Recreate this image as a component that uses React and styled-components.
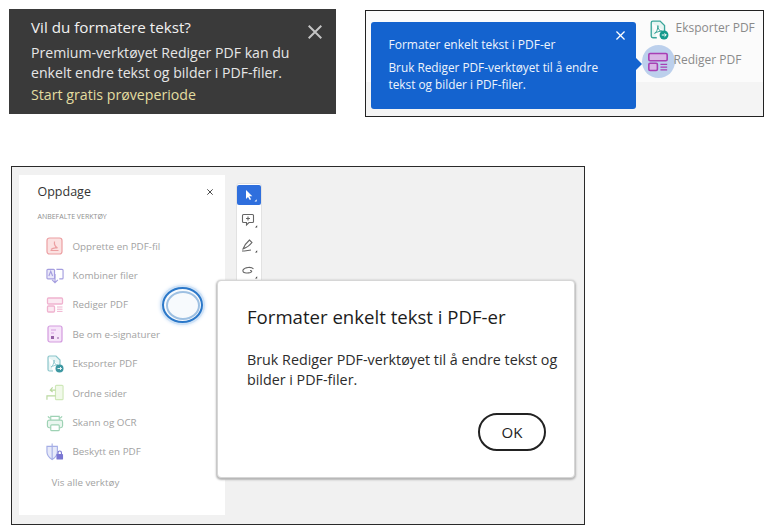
import React from 'react'
import styled, { createGlobalStyle } from 'styled-components'

const Global = createGlobalStyle`
  html, body { margin: 0; padding: 0; background: #fff; }
  body { font-family: "Open Sans", "Noto Sans", sans-serif; }
`

const Page = styled.div`
  width: 768px;
  height: 530px;
  overflow: hidden;
  position: relative;
`

const TopRow = styled.div`
  display: flex;
  align-items: flex-start;
  padding: 9px 0 0 9px;
`

const Banner = styled.div`
  width: 327px;
  height: 105px;
  box-sizing: border-box;
  background: #3a3a3a;
  padding: 8px 14px 0 22px;
  display: flex;
  justify-content: space-between;
  color: #f1f1f1;
`

const BannerTitle = styled.div`
  font-size: 15.2px;
  line-height: 20px;
  margin-bottom: 6px;
`

const BannerBody = styled.div`
  font-size: 14.1px;
  line-height: 20px;
  color: #e6e6e6;
`

const BannerLink = styled.div`
  font-size: 14.2px;
  line-height: 20px;
  margin-top: 2px;
  color: #e3dda0;
`

const BannerClose = styled.svg`
  width: 14px;
  height: 14px;
  margin-top: 8px;
  stroke: #c4c4c4;
  stroke-width: 1.4;
  flex: none;
`

const CoachFrame = styled.div`
  margin: 1px 0 0 29px;
  width: 399px;
  height: 107px;
  box-sizing: border-box;
  border: 1.5px solid #222;
  background: linear-gradient(#fbfbfb 0, #fbfbfb 71px, #f4f4f4 71px);
  display: flex;
  align-items: flex-start;
  padding: 10.5px 0 0 4.5px;
`

const Coach = styled.div`
  position: relative;
  width: 265px;
  height: 87px;
  flex: none;
  box-sizing: border-box;
  background: #1463cf;
  border-radius: 3px;
  color: #eef4fc;
  padding: 14px 24px 0 18px;
  font-size: 11.8px;
  line-height: 17px;

  &::after {
    content: '';
    position: absolute;
    right: -6px;
    top: 36px;
    border-left: 6px solid #1463cf;
    border-top: 6px solid transparent;
    border-bottom: 6px solid transparent;
  }
`

const CoachTitle = styled.div`
  margin-bottom: 6px;
  font-size: 12px;
`

const CoachClose = styled.svg`
  position: absolute;
  right: 11px;
  top: 9px;
  width: 9px;
  height: 9px;
  stroke: #fff;
  stroke-width: 1.4;
`

const SideList = styled.div`
  display: flex;
  flex-direction: column;
  gap: 10px;
  margin: -3px 0 0 6px;
`

const SideItem = styled.div`
  display: flex;
  align-items: center;
  height: 22px;
  gap: ${p => p.$gap}px;
  color: #8a8a8a;
  font-size: 12px;
  white-space: nowrap;
  padding-left: ${p => p.$indent || 0}px;
`

const SideLabel = styled.span`
  position: relative;
  top: -2px;
`

const IconHalo = styled.div`
  width: 33px;
  height: 33px;
  margin-right: -1px;
  border-radius: 50%;
  background: #bcd0ec;
  display: flex;
  align-items: center;
  justify-content: center;
  flex: none;
`

const Frame = styled.div`
  position: absolute;
  left: 11px;
  top: 166px;
  width: 574px;
  height: 359px;
  box-sizing: border-box;
  border: 1.5px solid #2a2a2a;
  background: #f1f1f1;
  display: flex;
  align-items: flex-start;
  padding: 7.5px 0 0 6.5px;
`

const Panel = styled.div`
  width: 206px;
  height: 340px;
  flex: none;
  box-sizing: border-box;
  background: #fff;
  padding: 8px 12px 0 19px;
  position: relative;
`

const PanelHead = styled.div`
  display: flex;
  justify-content: space-between;
  align-items: center;
  font-size: 12.5px;
  color: #333;
  height: 18px;
`

const PanelClose = styled.svg`
  width: 6px;
  height: 6px;
  stroke: #444;
  stroke-width: 1.6;
`

const SectionLabel = styled.div`
  font-size: 7px;
  color: #8e8e8e;
  margin: 10px 0 10px;
  line-height: 11px;
`

const ToolRow = styled.div`
  display: flex;
  align-items: center;
  height: 29.4px;
  gap: 9px;
  padding-left: 8px;
  font-size: 9.8px;
  color: #a2a2a2;
  white-space: nowrap;
`

const IconCell = styled.div`
  width: 18px;
  height: 18px;
  flex: none;
  display: flex;
  align-items: center;
  justify-content: center;
  opacity: 0.8;
`

const SeeAll = styled.div`
  font-size: 9.8px;
  color: #a2a2a2;
  margin: 9px 0 0 14px;
`

const Pulse = styled.div`
  position: absolute;
  left: 143.500px;
  top: 112.500px;
  width: 41px;
  height: 36px;
  box-sizing: border-box;
  border-radius: 50%;
  border: 2.500px solid #2b78c9;
  background: #f7fafd;
  box-shadow: 0 0 0 2px #cfe2f6, 0 0 3px 3px #e3eefa;

  &::after {
    content: '';
    position: absolute;
    inset: 1.500px;
    border-radius: 50%;
    border: 2px solid #9ec0e2;
  }
`

const Toolbar = styled.div`
  width: 26px;
  height: 130px;
  flex: none;
  box-sizing: border-box;
  margin: 8px 0 0 11px;
  background: #fff;
  border: 1px solid #e2e2e2;
  border-radius: 3px;
  padding: 1px 0 0 0;
  display: flex;
  flex-direction: column;
  align-items: center;
`

const ToolButton = styled.div`
  width: 24px;
  height: ${p => (p.$active ? 20 : 25.500)}px;
  margin-bottom: ${p => (p.$active ? 3 : 0)}px;
  border-radius: 2px;
  background: ${p => (p.$active ? '#2f6fdd' : 'transparent')};
  display: flex;
  align-items: center;
  justify-content: center;
  flex: none;
`

const Dialog = styled.div`
  position: absolute;
  left: 205px;
  top: 113px;
  width: 358px;
  height: 198px;
  box-sizing: border-box;
  background: #fff;
  border-radius: 4px;
  border: 1px solid #d6d6d6;
  box-shadow: 0 1px 2px 1px #b5b5b5;
  padding: 22px 10px 0 29px;
  display: flex;
  flex-direction: column;
`

const DialogTitle = styled.div`
  font-size: 18.600px;
  line-height: 28px;
  color: #1c1c1c;
  margin-bottom: 19px;
`

const DialogBody = styled.div`
  font-size: 14.300px;
  line-height: 20px;
  color: #2c2c2c;
`

const OkButton = styled.button`
  align-self: flex-end;
  width: 68px;
  height: 38px;
  margin: 23px 18px 0 0;
  border: 2px solid #222;
  border-radius: 19px;
  background: #fff;
  font: 15px "Open Sans", sans-serif;
  color: #222;
  padding: 0;
`

const Cross = ({ as: C }) =>
  <C viewBox="0 0 10 10" fill="none">
    <path d="M0.500 0.500 L9.500 9.500 M9.500 0.500 L0.500 9.500" />
  </C>

const Corner = ({ c = '#444' }) => <path d="M17 17.500h2.200v-2.200z" fill={c} stroke="none" />

const CreateIcon = () =>
  <svg width="17" height="18" viewBox="0 0 17 18" fill="none" stroke="#e8888c" strokeWidth="1.200">
    <rect x="1" y="1" width="15" height="16" rx="2.500" fill="#fbdcdc" />
    <path d="M4.500 13.500h8M8.500 4.500c-.5 3 .5 5 3 6.500-2.500-.5-5 0-6.500 1.500" />
  </svg>

const CombineIcon = () =>
  <svg width="19" height="18" viewBox="0 0 19 18" fill="none" stroke="#8f86d8" strokeWidth="1.200">
    <rect x="1" y="2" width="8" height="10" rx="1" fill="#e6e3f8" />
    <path d="M11 2h6a1 1 0 0 1 1 1v8a1 1 0 0 1-1 1h-3" />
    <path d="M9.500 7v9M6.500 13l3 3 3-3M3 9l2-5 2 5" />
  </svg>

const EditIcon = ({ size = 18, stroke = '#eda0c4', fill = '#fbe6f0' }) =>
  <svg width={size} height={size} viewBox="0 0 18 18" fill="none" stroke={stroke} strokeWidth="1.300">
    <rect x="1.500" y="2" width="15" height="6" rx="1" fill={fill} />
    <rect x="1.500" y="10" width="7" height="6" rx="1" fill={fill} />
    <path d="M11 11h5.500M11 13.200h5.500M11 15.400h5.500" strokeWidth="1" />
  </svg>

const SignIcon = () =>
  <svg width="16" height="18" viewBox="0 0 16 18" fill="none" stroke="#c983d8" strokeWidth="1.200">
    <rect x="1" y="1" width="14" height="16" rx="2" fill="#f5def8" />
    <path d="M4 5h5M4 8h3" />
    <rect x="4" y="11" width="3" height="3" fill="#7c3a90" stroke="none" />
    <path d="M10 13h2" stroke="#7c3a90" />
  </svg>

const ExportIcon = ({ size = 18, light = false }) =>
  <svg width={size} height={size} viewBox="0 0 18 18" fill="none" stroke={light ? '#6fb8bf' : '#3aa59a'} strokeWidth="1.200">
    <path d="M2 2.500a1.500 1.500 0 0 1 1.500-1.500H10l4 4v5M7 16H3.500A1.500 1.500 0 0 1 2 14.500V2.500" fill={light ? '#e3f3f3' : '#e6f5f2'} />
    <path d="M5 12c2-1 3-4 3-7 0 3 1 5 4 5-3 0-5 1-7 2z" strokeWidth="0.900" />
    <circle cx="13.500" cy="13.500" r="4" fill={light ? '#0f7f8c' : '#159a8c'} stroke="none" />
    <path d="M11.500 13.500h4M14 12l1.500 1.500L14 15" stroke="#fff" strokeWidth="0.900" />
  </svg>

const OrganizeIcon = () =>
  <svg width="19" height="18" viewBox="0 0 19 18" fill="none" stroke="#c4e3a8" strokeWidth="1.200">
    <rect x="10" y="1" width="8" height="15" rx="1" fill="#eef8e5" />
    <path d="M1 16v-4h9M7 3 4.500 6 7 8M5 6h5" stroke="#a8cf88" />
  </svg>

const ScanIcon = () =>
  <svg width="19" height="18" viewBox="0 0 19 18" fill="none" stroke="#86c8a2" strokeWidth="1.200">
    <path d="M5 6V2h9v4" />
    <rect x="1.500" y="6" width="16" height="8" rx="2" fill="#e6f5ec" />
    <rect x="5" y="11" width="9" height="6" rx="1" fill="#fff" />
    <path d="M2 2l2 2M17 2l-2 2" />
  </svg>

const ProtectIcon = () =>
  <svg width="19" height="18" viewBox="0 0 19 18" fill="none" stroke="#8f9be0" strokeWidth="1.200">
    <path d="M1 3h11v6c0 4-2.500 6-5.500 8C3.500 15 1 13 1 9z" fill="#e2e5f8" />
    <path d="M6.500 0v17" />
    <rect x="11" y="11" width="7" height="6" rx="1" fill="#5a55c8" stroke="none" />
    <path d="M12.700 11V9.800a1.800 1.800 0 0 1 3.600 0V11" stroke="#5a55c8" />
  </svg>

const tools = [
  ['Opprette en PDF-fil', CreateIcon],
  ['Kombiner filer', CombineIcon],
  ['Rediger PDF', EditIcon],
  ['Be om e-signaturer', SignIcon],
  ['Eksporter PDF', () => <ExportIcon light />],
  ['Ordne sider', OrganizeIcon],
  ['Skann og OCR', ScanIcon],
  ['Beskytt en PDF', ProtectIcon],
]

export default function App() {
  return (
    <Page>
      <Global />
      <TopRow>
        <Banner>
          <div>
            <BannerTitle>Vil du formatere tekst?</BannerTitle>
            <BannerBody>
              Premium-verktøyet Rediger PDF kan du<br />
              enkelt endre tekst og bilder i PDF-filer.
            </BannerBody>
            <BannerLink>Start gratis prøveperiode</BannerLink>
          </div>
          <Cross as={BannerClose} />
        </Banner>
        <CoachFrame>
          <Coach>
            <Cross as={CoachClose} />
            <CoachTitle>Formater enkelt tekst i PDF-er</CoachTitle>
            Bruk Rediger PDF-verktøyet til å endre<br />
            tekst og bilder i PDF-filer.
          </Coach>
          <SideList>
            <SideItem $indent={7} $gap={7}>
              <ExportIcon size={20} />
              <SideLabel>Eksporter PDF</SideLabel>
            </SideItem>
            <SideItem $gap={0}>
              <IconHalo><EditIcon size={22} stroke="#a83fb4" fill="#d9b6e6" /></IconHalo>
              <SideLabel>Rediger PDF</SideLabel>
            </SideItem>
          </SideList>
        </CoachFrame>
      </TopRow>

      <Frame>
        <Panel>
          <PanelHead>
            Oppdage
            <Cross as={PanelClose} />
          </PanelHead>
          <SectionLabel>ANBEFALTE VERKTØY</SectionLabel>
          {tools.map(([label, Icon]) =>
            <ToolRow key={label}>
              <IconCell><Icon /></IconCell>
              {label}
            </ToolRow>
          )}
          <SeeAll>Vis alle verktøy</SeeAll>
          <Pulse />
        </Panel>
        <Toolbar>
          <ToolButton $active>
            <svg width="21" height="20" viewBox="0 0 21 20">
              <path d="M8 5v9l2-2 1.800 3 1.300-.8-1.800-3h3z" fill="#fff" />
              <path d="M16.500 16.500h2.200v-2.200z" fill="#fff" />
            </svg>
          </ToolButton>
          <ToolButton>
            <svg width="21" height="21" viewBox="0 0 21 21" fill="none" stroke="#666" strokeWidth="1.100">
              <path d="M5.500 4.500h9a1 1 0 0 1 1 1v6a1 1 0 0 1-1 1H11l-2.500 2.500v-2.500h-3a1 1 0 0 1-1-1v-6a1 1 0 0 1 1-1z" />
              <path d="M10 6.500v4M8 8.500h4" />
              <Corner />
            </svg>
          </ToolButton>
          <ToolButton>
            <svg width="21" height="21" viewBox="0 0 21 21" fill="none" stroke="#666" strokeWidth="1.100">
              <path d="M5 14c1-3 2-5 6.500-9l2.500 2.500c-3.500 4.500-6 5.500-9 6.500zM4 16c3 0 5-.5 9-1" />
              <Corner />
            </svg>
          </ToolButton>
          <ToolButton>
            <svg width="21" height="21" viewBox="0 0 21 21" fill="none" stroke="#666" strokeWidth="1.100">
              <path d="M15.500 8c-2-2.500-9-2-10.500 1-1 3 4 3.500 7.500 2.500 2-1 1.500-2-.5-2" />
              <Corner />
            </svg>
          </ToolButton>
        </Toolbar>
        <Dialog>
          <DialogTitle>Formater enkelt tekst i PDF-er</DialogTitle>
          <DialogBody>
            Bruk Rediger PDF-verktøyet til å endre tekst og<br />
            bilder i PDF-filer.
          </DialogBody>
          <OkButton>OK</OkButton>
        </Dialog>
      </Frame>
    </Page>
  )
}
